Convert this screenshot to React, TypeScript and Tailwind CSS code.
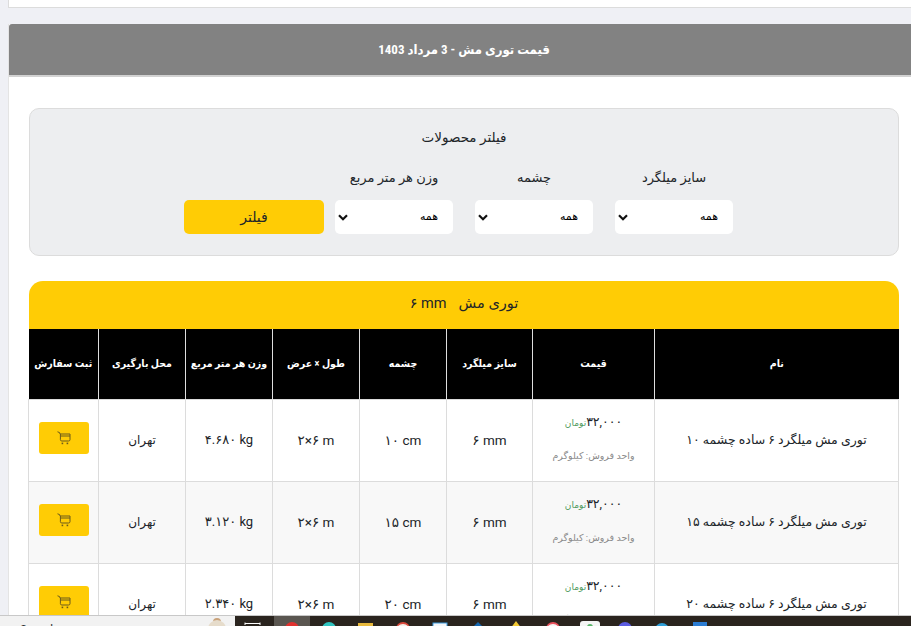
const COLS = ['w-[244px]', 'w-[122px]', 'w-[86px]', 'w-[87px]', 'w-[87px]', 'w-[87px]', 'w-[87px]', 'w-[70px]'];
const HEAD = ['نام', 'قیمت', 'سایز میلگرد', 'چشمه', 'طول × عرض', 'وزن هر متر مربع', 'محل بارگیری', 'ثبت سفارش'];

const ROWS = [
  { name: 'توری مش میلگرد ۶ ساده چشمه ۱۰', mesh: '۱۰ cm', weight: '۴.۶۸۰ kg' },
  { name: 'توری مش میلگرد ۶ ساده چشمه ۱۵', mesh: '۱۵ cm', weight: '۳.۱۲۰ kg' },
  { name: 'توری مش میلگرد ۶ ساده چشمه ۲۰', mesh: '۲۰ cm', weight: '۲.۳۴۰ kg' },
];

const FILTERS = ['سایز میلگرد', 'چشمه', 'وزن هر متر مربع'];

const CartIcon = () => (
  <svg width="14" height="14" viewBox="0 0 14 14" fill="none" stroke="#6b5a1c" strokeWidth="1">
    <path d="M0.5 0.8L2.6 1.6L3 3H13V8.6Q13 10 11.6 10H4.8Q3.4 10 3.4 8.6V3" />
    <path d="M3.4 5H13" />
    <rect x="4.6" y="11.6" width="1.6" height="1.6" fill="#6b5a1c" stroke="none" />
    <rect x="9.6" y="11.6" width="1.6" height="1.6" fill="#6b5a1c" stroke="none" />
  </svg>
);

const Filter = ({ label }: { label: string }) => (
  <div className="flex w-[118px] flex-col items-center gap-[11px]">
    <label className="text-[13px] leading-[22px] text-[#212529]">{label}</label>
    <div className="flex h-[34px] w-full items-center justify-between rounded-[5px] bg-white pr-[15px] pl-[3px] text-[11px] text-black">
      <span>همه</span>
      <svg width="10" height="7" viewBox="0 0 10 7" fill="none" stroke="#111" strokeWidth="2.2">
        <path d="M1 1.2l4 4 4-4" />
      </svg>
    </div>
  </div>
);

// Tray of app icons, only their tops show above the window edge
const TaskbarIcons = () => (
  <svg width="676" height="10" viewBox="235 616 676 10" className="block">
    <path d="M245 625V622.5M245 623.5H260M260 625V622.5" stroke="#fff" strokeWidth="1" fill="none" />
    <rect x="274" y="616" width="36" height="10" fill="#5a5650" />
    <circle cx="292" cy="629" r="7" fill="#e0312e" />
    <circle cx="329" cy="629" r="7" fill="#2fc4c0" />
    <rect x="358" y="623" width="15" height="6" fill="#e8b93c" />
    <circle cx="403" cy="629" r="7" fill="#d9483b" />
    <circle cx="403" cy="631" r="7" fill="#f2efe9" />
    <rect x="433" y="623" width="14" height="6" fill="#f4f6f8" stroke="#3d9be0" strokeWidth="1" />
    <path d="M471 629L478 622L485 629Z" fill="#1567b0" />
    <path d="M510 629L516 621L522 629Z" fill="#f2c832" />
    <circle cx="553" cy="629" r="7" fill="#e8505b" />
    <circle cx="553" cy="631" r="7" fill="#f4f4f4" />
    <rect x="580" y="621" width="20" height="8" rx="3" fill="#f5f5f5" />
    <circle cx="590" cy="627" r="3" fill="#58b368" />
    <circle cx="625" cy="629" r="7" fill="#5b5be0" />
    <circle cx="662" cy="630" r="7" fill="#2f9fd8" />
    <rect x="693" y="622" width="14" height="6" fill="#2b7cd3" />
  </svg>
);

export default function App() {
  return (
    <div dir="rtl" className="flex h-[626px] w-[911px] flex-col overflow-hidden bg-[#eff0f5] font-['Roboto','DejaVu_Sans',sans-serif]">
      <div className="min-h-0 flex-1 overflow-hidden pl-[8px]">
        {/* Top bar */}
        <div className="h-[8px] border-b border-l border-[#dcdcdc] bg-white" />

        <div className="mt-[16px] border-l border-[#e4e4e4] bg-white">
          {/* Title */}
          <div className="flex h-[53px] items-center justify-center rounded-tl-[3px] border-b-2 border-[#d2d2d2] bg-[#828282] pl-[8px] text-[13px] font-bold text-white [font-stretch:condensed]">
            قیمت توری مش - 3 مرداد 1403
          </div>

          <div className="pt-[31px] pr-[12px] pl-[20px]">
            {/* Filter box */}
            <div className="h-[148px] rounded-[10px] border border-[#dcdcdc] bg-[#edeef0] pt-[17px]">
              <div className="text-center text-[13.5px] leading-[22px] text-[#212529]">فیلتر محصولات</div>
              <div className="mt-[19px] mr-[165px] flex items-end gap-[22px]">
                {FILTERS.map((f) => (
                  <Filter key={f} label={f} />
                ))}
                <button className="-mr-[11px] h-[34px] w-[140px] rounded-[5px] bg-[#ffcc05] text-[14px] text-[#212529]">فیلتر</button>
              </div>
            </div>

            {/* Product table */}
            <div className="mt-[25px] flex h-[48px] items-center justify-center gap-[12px] rounded-t-[14px] bg-[#ffcc05] pb-[2px] text-[14.5px] text-[#212529]">
              <span>توری مش</span>
              <span dir="ltr">۶ mm</span>
            </div>
            <table className="w-[870px] table-fixed border-collapse text-center">
              <thead>
                <tr className="h-[70px] bg-black text-[10.5px] font-bold text-white [font-stretch:condensed]">
                  {HEAD.map((h, i) => (
                    <th key={h} className={`border-x border-[#dedede] font-bold first:border-r-0 last:border-l-0 ${COLS[i]}`}>
                      {h}
                    </th>
                  ))}
                </tr>
              </thead>
              <tbody>
                {ROWS.map((r, i) => (
                  <tr key={r.name} className={`h-[82px] text-[12px] text-[#212529] ${i === 1 ? 'bg-[#f8f8f8]' : 'bg-white'}`}>
                    <td className="border border-[#dcdcdc] text-[12.5px]">{r.name}</td>
                    <td className="border border-[#dcdcdc] pt-[13px] align-top">
                      <div className="text-[12.5px] leading-[18px]">
                        ۳۲,۰۰۰<span className="text-[9px] text-[#4e9a5e]">تومان</span>
                      </div>
                      <div className="mt-[17px] text-[9.5px] leading-[14px] text-[#8a8a8a]">واحد فروش: کیلوگرم</div>
                    </td>
                    <td className="border border-[#dcdcdc] text-[13.5px]"><span dir="ltr">۶ mm</span></td>
                    <td className="border border-[#dcdcdc] text-[13.5px]"><span dir="ltr">{r.mesh}</span></td>
                    <td className="border border-[#dcdcdc] text-[13.5px]"><span dir="ltr">۲×۶ m</span></td>
                    <td className="border border-[#dcdcdc] text-[13px]"><span dir="ltr">{r.weight}</span></td>
                    <td className="border border-[#dcdcdc]">تهران</td>
                    <td className="border border-[#dcdcdc]">
                      <button className="mx-auto mb-[4px] flex h-[32px] w-[50px] items-center justify-center rounded-[3px] bg-[#ffcc05]">
                        <CartIcon />
                      </button>
                    </td>
                  </tr>
                ))}
              </tbody>
            </table>
          </div>
        </div>
      </div>

      {/* Windows taskbar, cut off by the window */}
      <div dir="ltr" className="flex h-[11px] shrink-0 overflow-hidden border-t border-[#c8c8c8] bg-[#f2f2f2]">
        <div className="flex w-[235px] items-start">
          <span className="mt-[7px] ml-[20px] text-[12px] leading-[14px] text-[#333]">Search</span>
          <svg width="20" height="10" viewBox="0 0 20 10" className="mt-0 mr-[8px] ml-auto block">
            <circle cx="10" cy="6" r="4" fill="#c9a27a" />
            <circle cx="10" cy="13" r="9" fill="#e6dccb" />
          </svg>
        </div>
        <div className="flex-1 bg-[#2a241e]">
          <TaskbarIcons />
        </div>
      </div>
    </div>
  );
}
